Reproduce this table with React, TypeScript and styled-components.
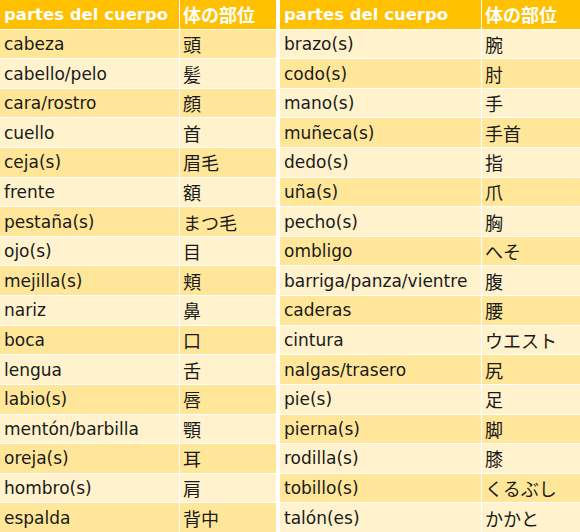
import * as React from 'react';
import styled, { createGlobalStyle } from 'styled-components';

const GlobalStyle = createGlobalStyle`
  html, body {
    margin: 0;
    padding: 0;
    background: #ffffff;
  }
`;

const Page = styled.div`
  display: flex;
  gap: 4px;
  width: 580px;
  height: 532px;
  font-family: "DejaVu Sans", Verdana, "Noto Sans CJK JP", sans-serif;
  font-size: 17px;
  color: #1a1a1a;
`;

const Table = styled.div<{ $width: number; $first: number }>`
  display: grid;
  width: ${p => p.$width}px;
  grid-template-columns: ${p => p.$first}px 1fr;
  grid-template-rows: repeat(18, 1fr);
  gap: 1px;
  background: #ffffff;
`;

const HeadCell = styled.div`
  display: flex;
  align-items: center;
  padding: 0 4px;
  background: #ffc000;
  color: #ffffff;
  font-weight: bold;
  font-size: 16.5px;
  white-space: nowrap;
`;

const Cell = styled.div<{ $dark: boolean }>`
  display: flex;
  align-items: center;
  padding: 0 4px;
  background: ${p => (p.$dark ? '#ffe699' : '#fff2cc')};
  white-space: nowrap;
`;

const JpCell = styled(Cell)`
  font-family: "Noto Sans CJK JP", sans-serif;
  font-size: 18px;
  padding-left: 3px;
`;

const JpHead = styled(HeadCell)`
  font-family: "Noto Sans CJK JP", sans-serif;
  font-size: 18px;
  padding-left: 3px;
`;

const left: [string, string][] = [
  ['cabeza', '頭'],
  ['cabello/pelo', '髪'],
  ['cara/rostro', '顔'],
  ['cuello', '首'],
  ['ceja(s)', '眉毛'],
  ['frente', '額'],
  ['pestaña(s)', 'まつ毛'],
  ['ojo(s)', '目'],
  ['mejilla(s)', '頬'],
  ['nariz', '鼻'],
  ['boca', '口'],
  ['lengua', '舌'],
  ['labio(s)', '唇'],
  ['mentón/barbilla', '顎'],
  ['oreja(s)', '耳'],
  ['hombro(s)', '肩'],
  ['espalda', '背中'],
];

const right: [string, string][] = [
  ['brazo(s)', '腕'],
  ['codo(s)', '肘'],
  ['mano(s)', '手'],
  ['muñeca(s)', '手首'],
  ['dedo(s)', '指'],
  ['uña(s)', '爪'],
  ['pecho(s)', '胸'],
  ['ombligo', 'へそ'],
  ['barriga/panza/vientre', '腹'],
  ['caderas', '腰'],
  ['cintura', 'ウエスト'],
  ['nalgas/trasero', '尻'],
  ['pie(s)', '足'],
  ['pierna(s)', '脚'],
  ['rodilla(s)', '膝'],
  ['tobillo(s)', 'くるぶし'],
  ['talón(es)', 'かかと'],
];

const WordTable = ({ rows, width, first, darkFirst }: { rows: [string, string][]; width: number; first: number; darkFirst: boolean }) => (
  <Table $width={width} $first={first}>
    <HeadCell>partes del cuerpo</HeadCell>
    <JpHead>体の部位</JpHead>
    {rows.map(([es, ja], i) => {
      const dark = (i % 2 === 0) === darkFirst;
      return (
        <React.Fragment key={es}>
          <Cell $dark={dark}>{es}</Cell>
          <JpCell $dark={dark}>{ja}</JpCell>
        </React.Fragment>
      );
    })}
  </Table>
);

export default function App() {
  return (
    <>
      <GlobalStyle />
      <Page>
        <WordTable rows={left} width={276} first={179} darkFirst={true} />
        <WordTable rows={right} width={300} first={201} darkFirst={false} />
      </Page>
    </>
  );
}
